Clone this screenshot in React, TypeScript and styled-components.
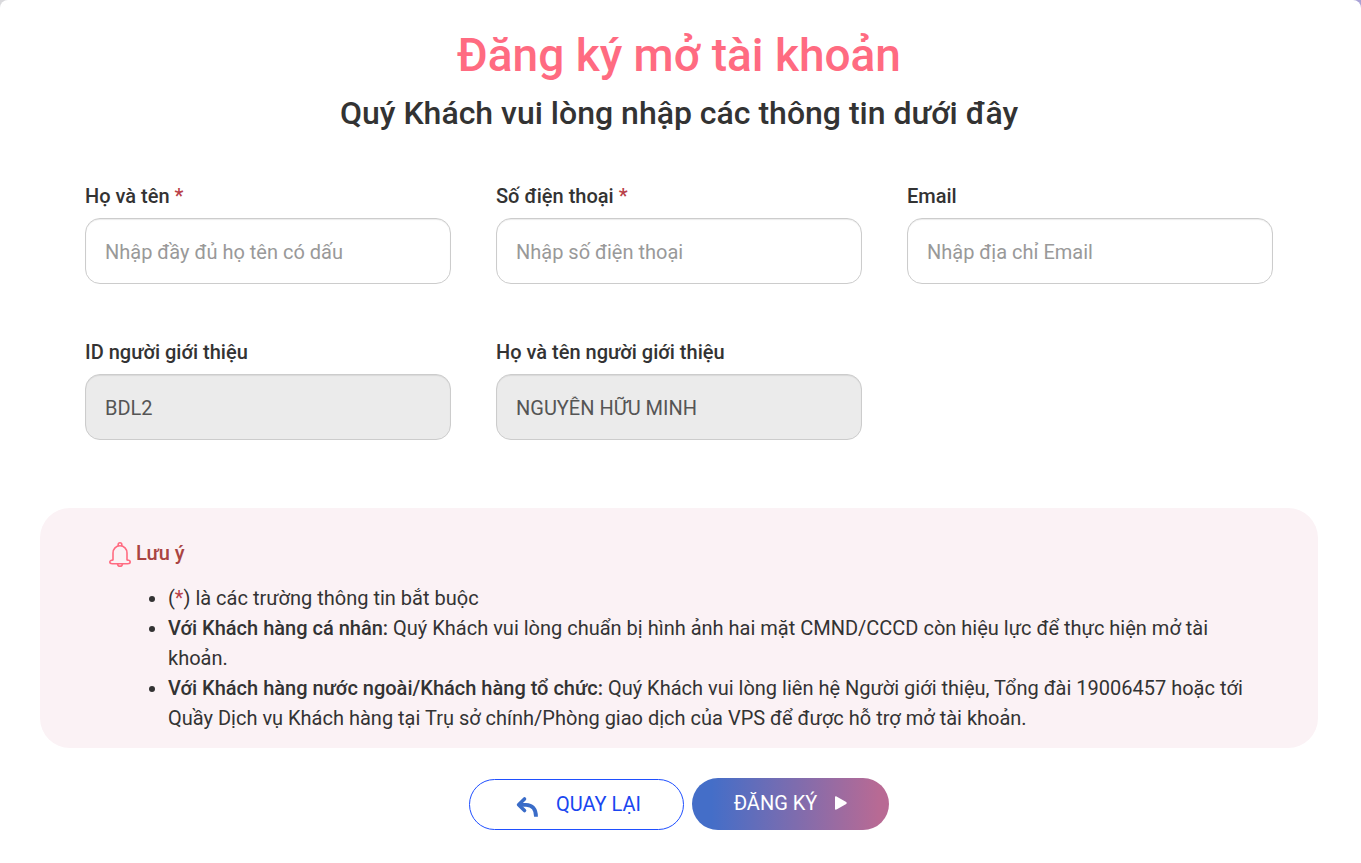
import React from "react";
import styled, { createGlobalStyle } from "styled-components";

const GlobalStyle = createGlobalStyle`
  *, *::before, *::after { box-sizing: border-box; }
  body {
    margin: 0;
    background: linear-gradient(90deg, #d9d9dc, #a9a2d6);
    color: #333;
    font-family: Roboto, "Liberation Sans", sans-serif;
    font-size: 20px;
    line-height: 30px;
  }
`;

const Card = styled.main`
  min-height: 100vh;
  padding: 25px 43px 32px 40px;
  background: #fff;
  border-radius: 8px 8px 0 0;
`;

const Header = styled.header`
  text-align: center;
`;

const Title = styled.h1`
  margin: 0;
  color: #ff6b81;
  font-size: 46px;
  font-weight: 500;
  line-height: 61px;
`;

const Subtitle = styled.h2`
  margin: 0;
  font-size: 32px;
  font-weight: 500;
  line-height: 54px;
`;

const Fields = styled.div`
  display: grid;
  grid-template-columns: repeat(3, 1fr);
  gap: 53px 45px;
  padding: 41px 45px 68px;
`;

const Field = styled.div`
  display: flex;
  flex-direction: column;
`;

const Label = styled.label`
  margin-bottom: 7px;
  font-weight: 500;
`;

const Required = styled.span`
  color: #b94048;
`;

const TextInput = styled.input`
  width: 100%;
  height: 66px;
  padding: 1px 19px 0;
  border: 1px solid #ccc;
  border-radius: 15px;
  background: #fff;
  color: #555;
  font: inherit;
  line-height: 63px;
  box-shadow: inset 0 1px 1px rgba(0, 0, 0, 0.08);

  &::placeholder {
    color: #999;
    opacity: 1;
  }

  &:read-only {
    background: #ebebeb;
  }
`;

const Note = styled.section`
  padding: 30px 68px 15px;
  border-radius: 30px;
  background: #fbf2f5;
`;

const NoteTitle = styled.h3`
  display: flex;
  align-items: center;
  gap: 4px;
  margin: 0 0 15px;
  color: #a94442;
  font-size: 20px;
  font-weight: 500;
  line-height: 30px;
`;

const NoteList = styled.ul`
  margin: 0;
  padding: 0 0 0 60px;
`;

const Strong = styled.strong`
  font-weight: 500;
`;

const Actions = styled.div`
  display: flex;
  justify-content: center;
  align-items: flex-end;
  gap: 8px;
  padding-top: 30px;
`;

const Button = styled.button<{ $primary?: boolean }>`
  display: flex;
  align-items: center;
  justify-content: center;
  gap: 18px;
  width: ${(p) => (p.$primary ? 197 : 215)}px;
  height: ${(p) => (p.$primary ? 52 : 51)}px;
  padding: ${(p) => (p.$primary ? "0 0 2px" : "0 0 2px 4px")};
  border: ${(p) => (p.$primary ? "0" : "1px solid #1f4fff")};
  border-radius: 26px;
  background: ${(p) =>
    p.$primary ? "linear-gradient(90deg, #446ec8 10%, #b86a94 95%)" : "#fff"};
  color: ${(p) => (p.$primary ? "#fff" : "#1a46f0")};
  font: inherit;
  cursor: pointer;
`;

const BellIcon = () => (
  <svg width="24" height="28" viewBox="0 -3 24 28" fill="none" stroke="#ff6b81" strokeWidth="1.6" strokeLinejoin="round" aria-hidden="true">
    <path d="M10.2 4V2.600a1.800 1.800 0 0 1 3.600 0V4" />
    <path d="M5 18.500v-7.500c0-4.200 3-7.200 7-7.200s7 3 7 7.200v7.500" />
    <path d="M5 18c-2 0-3.200.8-3.200 2s1 1.700 2.700 1.700h15c1.700 0 2.700-.5 2.700-1.700s-1.200-2-3.200-2" />
    <path d="M9.500 22c.3 1.400 1.200 2.200 2.500 2.200s2.200-.8 2.500-2.200" />
  </svg>
);

const BackIcon = () => (
  <svg width="22" height="28" viewBox="0 -6 22 28" fill="none" stroke="#3a6cc8" strokeLinejoin="round" aria-hidden="true">
    <path d="M8.500 3 2.600 8.800l5.900 5.700" strokeWidth="3.600" strokeLinecap="round" />
    <path d="M3 8.800h7c6 0 10 4 10 12" strokeWidth="3.800" />
  </svg>
);

const PlayIcon = () => (
  <svg width="12" height="16" viewBox="0 1 12 16" fill="#fff" aria-hidden="true">
    <path d="M0 3.200C0 2.400.800 2 1.500 2.400l9.700 5.700c.7.400.7 1.400 0 1.800l-9.700 5.700C.8 16 0 15.600 0 14.800z" />
  </svg>
);

type FieldSpec = {
  id: string;
  label: string;
  type?: string;
  required?: boolean;
  placeholder?: string;
  value?: string;
};

const fields: FieldSpec[] = [
  { id: "fullName", label: "Họ và tên", required: true, placeholder: "Nhập đầy đủ họ tên có dấu" },
  { id: "phone", label: "Số điện thoại", type: "tel", required: true, placeholder: "Nhập số điện thoại" },
  { id: "email", label: "Email", type: "email", placeholder: "Nhập địa chỉ Email" },
  { id: "refId", label: "ID người giới thiệu", value: "BDL2" },
  { id: "refName", label: "Họ và tên người giới thiệu", value: "NGUYỄN HỮU MINH" },
];

export default function App() {
  return (
    <>
      <GlobalStyle />
      <Card>
        <Header>
          <Title>Đăng ký mở tài khoản</Title>
          <Subtitle>Quý Khách vui lòng nhập các thông tin dưới đây</Subtitle>
        </Header>
        <form onSubmit={(e) => e.preventDefault()}>
          <Fields>
            {fields.map((f) => (
              <Field key={f.id}>
                <Label htmlFor={f.id}>
                  {f.label}
                  {f.required && <Required> *</Required>}
                </Label>
                <TextInput
                  id={f.id}
                  type={f.type ?? "text"}
                  placeholder={f.placeholder}
                  defaultValue={f.value}
                  required={f.required}
                  readOnly={f.value !== undefined}
                />
              </Field>
            ))}
          </Fields>
          <Note>
            <NoteTitle>
              <BellIcon />
              Lưu ý
            </NoteTitle>
            <NoteList>
              <li>
                (<Required>*</Required>) là các trường thông tin bắt buộc
              </li>
              <li>
                <Strong>Với Khách hàng cá nhân:</Strong> Quý Khách vui lòng chuẩn bị hình ảnh hai mặt
                CMND/CCCD còn hiệu lực để thực hiện mở tài khoản.
              </li>
              <li>
                <Strong>Với Khách hàng nước ngoài/Khách hàng tổ chức:</Strong> Quý Khách vui lòng liên
                hệ Người giới thiệu, Tổng đài 19006457 hoặc tới Quầy Dịch vụ Khách hàng tại Trụ sở
                chính/Phòng giao dịch của VPS để được hỗ trợ mở tài khoản.
              </li>
            </NoteList>
          </Note>
          <Actions>
            <Button type="button">
              <BackIcon />
              QUAY LẠI
            </Button>
            <Button type="submit" $primary>
              ĐĂNG KÝ
              <PlayIcon />
            </Button>
          </Actions>
        </form>
      </Card>
    </>
  );
}
